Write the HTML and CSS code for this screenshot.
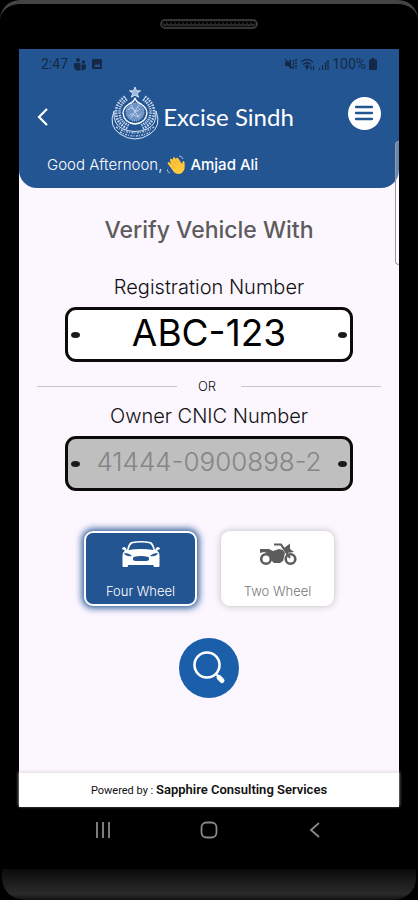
FILE: index.html
```html
<!DOCTYPE html>
<html lang="en">
    <head>
        <meta charset="utf-8">
        <meta name="viewport" content="width=device-width, initial-scale=1">
        <title>Excise Sindh</title>
        <link rel="stylesheet" href="styles.css">
    </head>
    <body>
        <div class="phone">
            <div class="bezel-top">
                <svg class="speaker" width="98" height="10" viewBox="0 0 98 10">
                    <rect x="1" y="1" width="96" height="8" rx="4" fill="#0c0c0c" stroke="#444" stroke-width="1.5"/>
                    <path d="M5 5H94" stroke="#3c3c3c" stroke-width="4" stroke-linecap="round" stroke-dasharray="0 4"/>
                    <path d="M5 4H94" stroke="#000" stroke-width="3" stroke-linecap="round" stroke-dasharray="0 4"/>
                </svg>
            </div>
            <div class="screen">
                <header class="header">
                    <div class="status">
                        <span class="status-side">
                            2:47
                            <svg width="12" height="13" viewBox="0 0 12 13" fill="#142947">
                                <circle cx="4" cy="2" r="2"/><circle cx="9.500" cy="4" r="1.700"/>
                                <path d="M0 5h6.500v7.500H2.500Q0 11 0 8zM7.500 6.500H12v4q-1 2-4.500 2z"/>
                            </svg>
                            <svg width="10" height="10" viewBox="0 0 10 10">
                                <rect width="10" height="10" rx="1" fill="#142947"/>
                                <path d="M2 8l2-3 1.500 1.500L7 4.500 8.500 8z" fill="#235592"/>
                            </svg>
                        </span>
                        <span class="status-side right">
                            <svg width="44" height="13" viewBox="0 0 44 13" fill="none" stroke="#142947">
                                <path d="M0 4h3l3-3v10L3 8H0z" fill="#142947" stroke="none"/>
                                <path d="M0 1l8 10" stroke-width="1.300"/>
                                <path d="M8.500 2v9M11 1v10" stroke-width="1.500" stroke-dasharray="2 1"/>
                                <path d="M16 4q6-5 12 0M18 6.500q4-3.500 8 0M20 8.500q2-2 4 0" stroke-width="1.300"/>
                                <path d="M21 9h2l-1 2zM26 8v4M28.500 8v4" stroke-width="1.200"/>
                                <path d="M34.500 10v2M37.500 7v5M40.500 4v8M43 2v10" stroke-width="1.300"/>
                            </svg>
                            100%
                            <svg width="8" height="12" viewBox="0 0 8 12" fill="#142947">
                                <path d="M2.500 0h3v1.500H7q1 0 1 1V11q0 1-1 1H1q-1 0-1-1V2.500q0-1 1-1h1.500z"/>
                            </svg>
                        </span>
                    </div>
                    <div class="topbar">
                        <button class="icon-btn" aria-label="Back">
                            <svg width="12" height="20" viewBox="0 0 12 20" fill="none" stroke="#fff" stroke-width="2.200">
                                <path d="M10 2L2 10l8 8"/>
                            </svg>
                        </button>
                        <div class="brand">
                            <svg class="emblem" width="48" height="54" viewBox="0 0 48 54" fill="none" stroke="#dce8f8">
                                <path d="M24 1l1.500 3.800h4l-3.200 2.500 1.300 4L24 9l-3.600 2.300 1.300-4-3.200-2.500h4z" fill="#9db8dc" stroke-width=".9"/>
                                <path d="M3 25Q-3 40 9 48q15 10 30 0 12-8 6-23" stroke-width="1"/>
                                <path d="M3 25q-1 14 9 18 12 5 24 0 10-4 9-18" stroke-width="1"/>
                                <path d="M5 41q19 12 38 0M9 46q15 8 30 0" stroke="#b4c9e6" stroke-width="1.500" stroke-dasharray="2 1 1 1.500"/>
                                <path d="M15 12Q5 19 7 29q1 8 10 12M33 12q10 7 8 17-1 8-10 12" stroke="#c3d4ec" stroke-width="6" stroke-dasharray="1.500 1"/>
                                <path d="M14 12Q5 20 7 29q1 8 10 12M34 12q9 8 7 17-1 8-10 12" stroke="#235592" stroke-width=".9"/>
                                <path d="M24 12q-1 4-6 6-6 4-6 9 1 10 12 11 11-1 12-11 0-5-6-9-5-2-6-6z" fill="#235592" stroke="#fff" stroke-width="1.400"/>
                                <circle cx="24" cy="26" r="9" fill="#6f94c5" stroke-width=".7" stroke-dasharray="1 1"/>
                                <path d="M17 24q3-4 6 0 3 3 6-1m-11 7q3-4 6 0 3 2 6-2M20 19l8 13m0-13l-8 13" stroke-width=".7"/>
                            </svg>
                            <span class="brand-name">Excise Sindh</span>
                        </div>
                        <button class="menu-btn" aria-label="Menu">
                            <svg width="20" height="16" viewBox="0 0 20 16" stroke="#235592" stroke-width="2.300" stroke-linecap="round">
                                <path d="M2 2h16M2 8h16M2 14h16"/>
                            </svg>
                        </button>
                    </div>
                    <div class="greeting">
                        Good Afternoon,
                        <svg width="18" height="20" viewBox="0 0 18 20">
                            <path d="M1 9q-1-2 1-2l2 2-1-4q0-2 2-1l1 1V3q1-2 2 0l1 1q0-2 2-1l4 6 .500-2q1-2 2 0 .500 5 0 7-2 5-6 5-4 0-6-4z" fill="#ffc83d"/>
                            <path d="M4 8l4 5M6 5.500l4 5M9 4.500l3 4" stroke="#e39a22" stroke-width=".8" fill="none"/>
                            <path d="M12 1q3 0 4 3M0 14q0 3 3 4" stroke="#a9bdd8" fill="none"/>
                        </svg>
                        <b>Amjad Ali</b>
                    </div>
                </header>
                <span class="edge-handle"></span>
                <main class="content">
                    <h1>Verify Vehicle With</h1>
                    <label for="reg">Registration Number</label>
                    <div class="plate">
                        <input id="reg" type="text" value="ABC-123">
                    </div>
                    <div class="or">OR</div>
                    <label for="cnic">Owner CNIC Number</label>
                    <div class="plate disabled">
                        <input id="cnic" type="text" placeholder="41444-0900898-2">
                    </div>
                    <div class="types">
                        <button class="type active">
                            <svg width="38" height="27" viewBox="0 0 38 27" fill="#fff">
                                <path d="M5 9Q6 3 9 1q10-2 20 0 3 2 4 8l2-3q3 0 3 2l-3 1.500q2.500 2 2.500 5V25q0 1-1 1h-4q-1 0-1-1v-1H6v1q0 1-1 1H1.500q-1 0-1-1V14.500q0-3 2.500-5L0 8q0-2 3-2z"/>
                                <path d="M10 2.500q9-2 18 0 2.500 2 3.500 6.500-12.500-2-25 0 1-4.500 3.500-6.500z" fill="#235592"/>
                                <path d="M2 12q5 0 8 3-6 1-8-3zM36 12q-5 0-8 3 6 1 8-3zM11.500 16q7.500-2 15 0 2 4-2.500 4H14q-4.500 0-2.500-4z" fill="#235592"/>
                            </svg>
                            Four Wheel
                        </button>
                        <button class="type">
                            <svg width="38" height="27" viewBox="0 0 38 27" fill="#5c5c5c">
                                <circle cx="7" cy="18" r="4.800" fill="none" stroke="#5c5c5c" stroke-width="2.600"/>
                                <circle cx="31.500" cy="18" r="4.800" fill="none" stroke="#5c5c5c" stroke-width="2.600"/>
                                <path d="M1 8h9l4 2 6-2 4 1 2 3-2 8-3 2h-6l-3-3q0-6-7-8l-4 1z"/>
                                <path d="M15 3.500h7L31 17" fill="none" stroke="#5c5c5c" stroke-width="2.200"/>
                                <path d="M25 7l6-4.500V8l4 3-7 1z"/>
                            </svg>
                            Two Wheel
                        </button>
                    </div>
                    <button class="search" aria-label="Search">
                        <svg width="34" height="34" viewBox="0 0 34 34" fill="none" stroke="#fff" stroke-linecap="round">
                            <circle cx="15" cy="14" r="12.500" stroke-width="2.600"/>
                            <path d="M24 23l3 3" stroke-width="2"/>
                            <path d="M27 26.500l3 3" stroke-width="5"/>
                        </svg>
                    </button>
                </main>
                <footer class="footer">Powered by : <b>Sapphire Consulting Services</b></footer>
            </div>
            <nav class="nav">
                <button class="icon-btn" aria-label="Recent apps">
                    <svg width="16" height="16" viewBox="0 0 16 16" stroke="#898989" stroke-width="1.800"><path d="M2 0v16M8 0v16M14 0v16"/></svg>
                </button>
                <button class="icon-btn" aria-label="Home">
                    <svg width="18" height="18" viewBox="0 0 18 18" fill="none" stroke="#898989" stroke-width="1.800"><rect x="1.500" y="1.500" width="15" height="15" rx="5"/></svg>
                </button>
                <button class="icon-btn" aria-label="Go back">
                    <svg width="16" height="16" viewBox="0 0 16 16" fill="none" stroke="#898989" stroke-width="1.800"><path d="M12 1L4 8l8 7"/></svg>
                </button>
            </nav>
            <div class="bezel-bottom"></div>
        </div>
    </body>
</html>
```

FILE: styles.css
```css
* {
    box-sizing: border-box;
}
body {
    margin: 0;
    background: #000;
    font-family: Inter, "Open Sans", sans-serif;
    color: #111;
}
button {
    font-family: inherit;
    padding: 0;
    border: none;
    background: none;
    cursor: pointer;
}
svg {
    display: block;
    flex: none;
}
.phone {
    display: flex;
    flex-direction: column;
    min-height: 100vh;
    background: #000;
    border-top: 4px solid #444;
    border-radius: 20px 20px 24px 24px;
    overflow: hidden;
}
.bezel-top {
    display: flex;
    justify-content: center;
    height: 45px;
    padding-top: 15px;
}
.screen {
    position: relative;
    flex: 1;
    display: flex;
    flex-direction: column;
    margin: 0 19px;
    background: #fcf6ff;
}
.header {
    padding: 4px 18px 0;
    height: 139px;
    background: #235592;
    border-radius: 0 0 18px 18px;
    color: #fff;
}
.status {
    display: flex;
    justify-content: space-between;
    padding: 0 4px;
    font-family: Roboto, sans-serif;
    font-size: 14px;
    line-height: 22px;
    color: #142947;
}
.status-side {
    display: flex;
    align-items: center;
    gap: 6px;
}
.status-side.right {
    gap: 3px;
}
.topbar {
    display: flex;
    align-items: center;
    justify-content: space-between;
    height: 76px;
}
.icon-btn {
    display: flex;
    justify-content: center;
    width: 32px;
}
.topbar .icon-btn {
    justify-content: flex-start;
    width: 20px;
    padding-top: 8px;
}
.brand {
    display: flex;
    align-items: center;
    gap: 4px;
}
.brand-name {
    font-family: Lato, "Open Sans", sans-serif;
    font-size: 24px;
    line-height: 30px;
    padding-top: 8px;
}
.menu-btn {
    display: flex;
    align-items: center;
    justify-content: center;
    width: 33px;
    height: 33px;
    border-radius: 50%;
    background: #fff;
}
.greeting {
    display: flex;
    align-items: center;
    gap: 5px;
    padding-left: 10px;
    font-size: 15px;
    font-weight: 300;
    line-height: 28px;
}
.greeting b {
    font-weight: 500;
}
.edge-handle {
    position: absolute;
    top: 92px;
    right: 0;
    width: 4px;
    height: 124px;
    border: 1px solid #9a9aa4;
    border-right: none;
    border-radius: 4px 0 0 4px;
    background: rgba(255, 255, 255, .3);
}
.content {
    flex: 1;
    display: flex;
    flex-direction: column;
    align-items: center;
    padding: 24px 18px;
}
h1 {
    margin: 0 0 24px;
    font-size: 23px;
    font-weight: 500;
    line-height: 36px;
    color: #5c5c5c;
}
label {
    font-size: 20px;
    font-weight: 300;
    line-height: 30px;
}
.plate {
    display: flex;
    align-items: center;
    justify-content: space-between;
    width: 84%;
    height: 55px;
    margin-top: 5px;
    padding: 0 3px;
    border: 3px solid #0b0b0b;
    border-radius: 11px;
    background: #fff;
}
.plate::before, .plate::after {
    content: "";
    flex: none;
    width: 9px;
    height: 6px;
    border-radius: 50%;
    background: #1a1a1a;
}
.plate input {
    flex: 1;
    min-width: 0;
    padding: 0 0 4px;
    border: none;
    outline: none;
    background: none;
    font-family: inherit;
    font-size: 37px;
    font-weight: 400;
    text-align: center;
    color: #000;
}
.plate.disabled {
    background: #bfbfbf;
}
.plate.disabled input {
    font-size: 26px;
    font-weight: 300;
}
.plate.disabled input::placeholder {
    color: #858585;
    opacity: 1;
}
.or {
    display: flex;
    align-items: center;
    align-self: stretch;
    margin: 12px 0 3px;
    font-size: 13px;
    font-weight: 300;
    line-height: 24px;
}
.or::before, .or::after {
    content: "";
    flex: 1;
    height: 1px;
    background: #c9c4cd;
}
.or::before {
    margin-right: 21px;
}
.or::after {
    margin-left: 25px;
}
.types {
    display: flex;
    gap: 24px;
    margin-top: 40px;
}
.type {
    display: flex;
    flex-direction: column;
    align-items: center;
    justify-content: space-between;
    width: 113px;
    height: 75px;
    padding: 8px 0 3px;
    border: 2px solid #fff;
    border-radius: 9px;
    background: #fff;
    box-shadow: 0 0 7px #bbb;
    font-size: 13px;
    font-weight: 300;
    line-height: 20px;
    color: #777;
}
.type.active {
    background: #235592;
    box-shadow: 0 0 7px 2px #235592;
    color: #fff;
}
.search {
    display: flex;
    align-items: center;
    justify-content: center;
    width: 60px;
    height: 60px;
    margin-top: 32px;
    border-radius: 50%;
    background: #1b5faa;
}
.footer {
    background: #fff;
    box-shadow: 0 -1px 3px #ddd;
    font-family: Roboto, sans-serif;
    font-size: 11px;
    line-height: 33px;
    text-align: center;
}
.footer b {
    font-size: 13px;
    font-weight: 600;
}
.nav {
    display: flex;
    justify-content: space-around;
    align-items: center;
    height: 46px;
    padding: 0 50px;
}
.bezel-bottom {
    height: 31px;
    margin: 16px 2px 0;
    border-radius: 0 0 22px 22px;
    background: linear-gradient(#0b0b0b, #2a2a2a 80%, #111);
}
```
